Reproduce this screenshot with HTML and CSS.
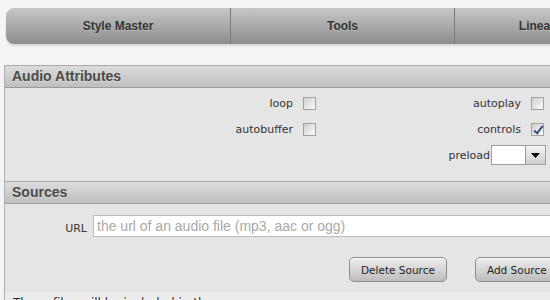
FILE: index.html
```html
<!doctype html>
<html lang="en">
	<head>
		<meta charset="utf-8">
		<title>Audio Element Builder</title>
		<link rel="stylesheet" href="styles.css">
	</head>
  <body>
    <nav class="menu">
      <a class="menu-item" href="#">Style Master</a>
      <a class="menu-item" href="#">Tools</a>
      <a class="menu-item" href="#">Linear Gradients</a>
    </nav>

    <section class="panel">
      <h2 class="panel-title">Audio Attributes</h2>
      <div class="panel-body attrs">
        <label class="attr"><span>loop</span><input type="checkbox"></label>
        <label class="attr"><span>autoplay</span><input type="checkbox"></label>
        <label class="attr"><span>autobuffer</span><input type="checkbox"></label>
        <label class="attr"><span>controls</span><input type="checkbox" checked></label>
        <div class="attr attr-select">
          <span>preload</span>
          <span class="select-box">
            <span class="select-value"></span>
            <span class="select-arrow">
              <svg width="9" height="5" viewBox="0 0 9 5"><path d="M0 0H9L4.5 5Z" fill="#000"/></svg>
            </span>
          </span>
        </div>
      </div>

      <h2 class="panel-title">Sources</h2>
      <div class="panel-body sources">
        <div class="source-row">
          <label class="source-label" for="url">URL</label>
          <input class="source-input" id="url" type="text" placeholder="the url of an audio file (mp3, aac or ogg)">
        </div>
        <div class="actions">
          <button class="btn" type="button">Delete Source</button>
          <button class="btn" type="button">Add Source</button>
        </div>
      </div>
      <p class="panel-note">These files will be included in the page</p>
    </section>
  </body>
</html>
```

FILE: styles.css
```css
* { box-sizing: border-box; }

html {
	overflow: hidden;
}

body {
	margin: 0;
	padding-top: 8px;
	background-color: #f4f4f4;
	font-family: "DejaVu Sans", Verdana, sans-serif;
	font-size: 11px;
	color: #333;
}

/* Top menu */
.menu {
	display: flex;
	width: 700px;
	height: 36px;
	margin-left: 6px;
	border-radius: 8px 0 0 8px;
	background: linear-gradient(#c7c7c7, #8d8d8d);
	box-shadow: 0 2px 2px rgba(0, 0, 0, 0.12);
}
.menu-item {
	flex: 0 0 224px;
	line-height: 36px;
	text-align: center;
	font-family: "Liberation Sans", Arial, sans-serif;
	font-size: 12px;
	font-weight: bold;
	color: #333;
	text-decoration: none;
	text-shadow: 0 1px 0 rgba(255, 255, 255, 0.25);
}
.menu-item + .menu-item {
	border-left: 1px solid #7b7b7b;
}

/* Panel */
.panel {
	width: 600px;
	margin: 21px 0 0 4px;
	border-left: 1px solid #b0b0b0;
	background-color: #e5e5e5;
}
.panel-title {
	margin: 0;
	height: 23px;
	padding-left: 7px;
	border-top: 1px solid #aaa;
	border-bottom: 1px solid #9c9c9c;
	background: linear-gradient(#dcdcdc, #bfbfbf);
	font-family: "Liberation Sans", Tahoma, sans-serif;
	font-size: 14px;
	font-weight: bold;
	line-height: 21px;
	color: #4a4a4a;
	text-shadow: 0 1px 0 rgba(255, 255, 255, 0.35);
}

/* Attributes grid */
.attrs {
	display: grid;
	grid-template-columns: 313px 228px;
	grid-auto-rows: 26px;
	padding: 2px 0 13px;
}
.attr {
	display: flex;
	justify-content: flex-end;
	align-items: center;
	gap: 10px;
}
.attr-select {
	grid-column: 2;
	gap: 1px;
}

.attr input[type="checkbox"] {
	-webkit-appearance: none;
	appearance: none;
	position: relative;
	width: 13px;
	height: 13px;
	margin: 0 2px 0 0;
	border: 1px solid #a2a2a2;
	background: linear-gradient(135deg, #d0d0d0, #fafafa);
}
.attr input[type="checkbox"]:checked::after {
	content: "";
	position: absolute;
	left: 4px;
	top: 0;
	width: 3px;
	height: 8px;
	border: solid #3d4f88;
	border-width: 0 2px 2px 0;
	transform: rotate(38deg);
}

.select-box {
	display: flex;
	width: 55px;
	height: 20px;
	border: 1px solid #a0a0a0;
	background-color: #fff;
}
.select-value {
	flex: 1;
}
.select-arrow {
	display: flex;
	align-items: center;
	justify-content: center;
	width: 20px;
	border-left: 1px solid #9a9a9a;
	background: linear-gradient(#f4f4f4, #cdcdcd);
}

/* Sources */
.sources {
	padding: 11px 0 10px;
}
.source-row {
	display: grid;
	grid-template-columns: 82px 470px;
	column-gap: 6px;
}
.source-label {
	align-self: end;
	justify-self: end;
	padding-bottom: 2px;
}
.source-input {
	height: 22px;
	margin: 0;
	padding: 0 3px;
	border: 1px solid #bcbcbc;
	background-color: #fff;
	font-family: "Liberation Sans", Arial, sans-serif;
	font-size: 14px;
}
.source-input::placeholder {
	color: #a9a9a9;
}

.actions {
	display: flex;
	gap: 28px;
	margin-top: 20px;
	padding-left: 344px;
}
.btn {
	height: 25px;
	padding: 0 11px;
	border: 1px solid #8e8e8e;
	border-radius: 5px;
	background: linear-gradient(#eeeeee, #bdbdbd);
	box-shadow: inset 0 1px 0 rgba(255, 255, 255, 0.6);
	font-family: "DejaVu Sans", Verdana, sans-serif;
	font-size: 10.5px;
	color: #222;
	white-space: nowrap;
}

.panel-note {
	margin: 0;
	padding: 4px 8px;
	background-color: #ececec;
	font-size: 12px;
}
```
